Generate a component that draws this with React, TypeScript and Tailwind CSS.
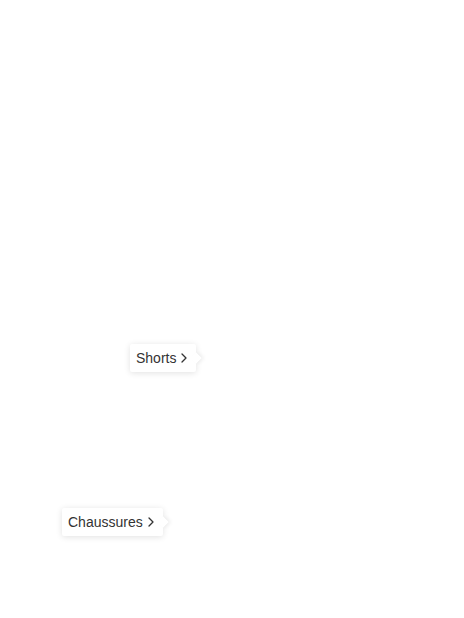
const TIPS = [
  { label: 'Shorts', left: 130, top: 344 },
  { label: 'Chaussures', left: 62, top: 508 },
]

function Chevron() {
  return (
    <svg width="6" height="10" viewBox="0 0 6 10" className="ml-[5px]" fill="none">
      <path d="M1 1l4 4-4 4" stroke="#333" strokeWidth="1.3" strokeLinecap="round" strokeLinejoin="round" />
    </svg>
  )
}

export default function App() {
  return (
    <div className="relative h-[618px] w-full bg-white" style={{ fontFamily: '"Liberation Sans", Arial, sans-serif' }}>
      {TIPS.map((tip) => (
        <div
          key={tip.label}
          className="absolute flex h-[28px] items-center"
          style={{ left: tip.left, top: tip.top }}
        >
          <div className="relative flex h-full items-center rounded-[2px] bg-white pl-[6px] pr-[9px] text-[14px] text-[#333] shadow-[0_1px_6px_rgba(0,0,0,0.12)]">
            <span>{tip.label}</span>
            <Chevron />
            <div className="absolute -right-[4px] top-1/2 h-[8px] w-[8px] -translate-y-1/2 rotate-45 bg-white shadow-[2px_-2px_4px_rgba(0,0,0,0.06)]" />
          </div>
        </div>
      ))}
    </div>
  )
}
